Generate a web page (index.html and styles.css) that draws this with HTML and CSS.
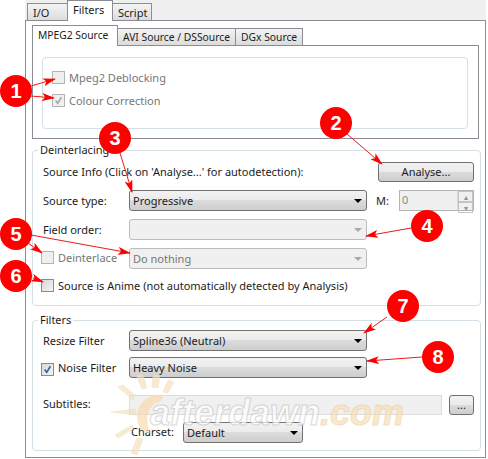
FILE: index.html
```html
<!DOCTYPE html>
<html lang="en">

<head>
    <meta charset="UTF-8">
    <title>Filters</title>

    <link rel="stylesheet" href="styles.css">
</head>

<body>
    <div class="window">
        <div class="tabs">
            <div class="tab">I/O</div>
            <div class="tab active">Filters</div>
            <div class="tab">Script</div>
        </div>

        <div class="panel">
            <div class="tabs inner">
                <div class="tab active">MPEG2 Source</div>
                <div class="tab">AVI Source / DSSource</div>
                <div class="tab">DGx Source</div>
            </div>
            <div class="inner-panel">
                <div class="group options">
                    <div class="check-row muted"><span class="check"></span>Mpeg2 Deblocking</div>
                    <div class="check-row muted">
                        <span class="check">
                            <svg viewBox="0 0 11 11"><path d="M2 5.5 L4.5 9 L9 1.5" fill="none" stroke="#a8a8a8" stroke-width="2"/></svg>
                        </span>Colour Correction
                    </div>
                </div>
            </div>

            <div class="group deinterlacing">
                <span class="group-title">Deinterlacing</span>
                <div class="row">
                    <span class="grow">Source Info (Click on 'Analyse...' for autodetection):</span>
                    <div class="button analyse">Analyse...</div>
                </div>
                <div class="row">
                    <span class="label">Source type:</span>
                    <div class="select">Progressive<i class="caret"></i></div>
                    <span class="m-label">M:</span>
                    <div class="spinner">
                        <span>0</span>
                        <div class="spin-btns"><b>▴</b><b>▾</b></div>
                    </div>
                </div>
                <div class="row">
                    <span class="label">Field order:</span>
                    <div class="select disabled"><i class="caret"></i></div>
                </div>
                <div class="row">
                    <div class="check-row label muted raised"><span class="check"></span>Deinterlace</div>
                    <div class="select disabled">Do nothing<i class="caret"></i></div>
                </div>
                <div class="row">
                    <div class="check-row anime"><span class="check plain"></span>Source is Anime (not automatically detected by Analysis)</div>
                </div>
            </div>

            <div class="group filters">
                <span class="group-title">Filters</span>
                <div class="row">
                    <span class="label">Resize Filter</span>
                    <div class="select">Spline36 (Neutral)<i class="caret"></i></div>
                </div>
                <div class="row noise">
                    <div class="check-row label">
                        <span class="check plain">
                            <svg viewBox="0 0 11 11"><path d="M2 5.5 L4.5 9 L9 1.5" fill="none" stroke="#3c5fa8" stroke-width="2"/></svg>
                        </span>Noise Filter
                    </div>
                    <div class="select">Heavy Noise<i class="caret"></i></div>
                </div>
                <div class="row subtitles">
                    <span class="label subtitles-label">Subtitles:</span>
                    <div class="text-input"></div>
                    <div class="button browse">...</div>
                </div>
                <div class="row charset">
                    <span class="charset-label">Charset:</span>
                    <div class="select charset-select">Default<i class="caret"></i></div>
                </div>
            </div>
        </div>
    </div>

    <!-- watermark -->
    <div class="watermark">
        <svg class="sun" viewBox="0 0 90 90">
            <g fill="#f6e2c0" stroke="#e8d6b4" stroke-width="0.5">
                <polygon points="26,3 33,2 37,16 32,17"/>
                <polygon points="43,3 50,3 48,16 42,15"/>
                <polygon points="58,8 64,10 58,21 53,20"/>
                <polygon points="8,15 13,13 25,23 23,28"/>
                <polygon points="1,40 25,37 26,43"/>
                <polygon points="5,63 22,53 23,57 8,66"/>
                <polygon points="27,66 33,67 27,83 21,81"/>
            </g>
            <path d="M53 23 C38 21 27 32 27 44 C27 54 32 61 40 61 C36 52 36 40 43 33 C47 30 53 31 53 23 Z" fill="#f8dcae"/>
        </svg>
        <span class="wm-text">afterdawn<em>.com</em></span>
    </div>

    <!-- annotation arrows -->
    <svg class="arrows" width="488" height="459" viewBox="0 0 488 459">
        <defs>
            <marker id="head" markerWidth="13" markerHeight="8" refX="12" refY="4" orient="auto" markerUnits="userSpaceOnUse">
                <path d="M0 0 L13 4 L0 8 L3 4 Z" fill="#ff0000"/>
            </marker>
        </defs>
        <g stroke="#f01818" stroke-width="1" fill="none">
            <line x1="31" y1="86" x2="55" y2="79" marker-end="url(#head)"/>
            <line x1="31" y1="96" x2="54" y2="98" marker-end="url(#head)"/>
            <line x1="347" y1="134" x2="382" y2="164" marker-end="url(#head)"/>
            <line x1="120" y1="153" x2="132" y2="192" marker-end="url(#head)"/>
            <line x1="411" y1="228" x2="366" y2="236" marker-end="url(#head)"/>
            <line x1="31" y1="235" x2="130" y2="253" marker-end="url(#head)"/>
            <line x1="28" y1="243" x2="42" y2="253" marker-end="url(#head)"/>
            <line x1="33" y1="278" x2="43" y2="282" marker-end="url(#head)"/>
            <line x1="387" y1="317" x2="364" y2="333" marker-end="url(#head)"/>
            <line x1="422" y1="357" x2="367" y2="361" marker-end="url(#head)"/>
        </g>
    </svg>

    <div class="badge b1">1</div>
    <div class="badge b2">2</div>
    <div class="badge b3">3</div>
    <div class="badge b4">4</div>
    <div class="badge b5">5</div>
    <div class="badge b6">6</div>
    <div class="badge b7">7</div>
    <div class="badge b8">8</div>
</body>

</html>
```

FILE: styles.css
```css
* {
    box-sizing: border-box;
}

body {
    font-family: "Noto Sans", sans-serif;
    font-size: 11px;
    color: #1c1c1c;
    background-color: #fff;
    margin: 0;
    width: 488px;
    height: 459px;
    position: relative;
    overflow: hidden;
}

.window {
    margin-left: 25px;
    width: 461px;
}

.tabs {
    display: flex;
    align-items: flex-end;
    height: 20px;
    padding-left: 2px;
    background-color: #f0f0f0;
    position: relative;
    z-index: 1;
}

.tab {
    height: 17px;
    padding: 0 5px;
    line-height: 17px;
    white-space: nowrap;
    background: linear-gradient(#f4f4f4, #dcdcdc);
    border: 1px solid #8c8c94;
    border-bottom: none;
    margin-left: -1px;
}

.tab:first-child {
    margin-left: 0;
}

.tabs > .tab:nth-child(1) {
    width: 41px;
}

.tabs > .tab:nth-child(2) {
    width: 46px;
}

.tabs > .tab:nth-child(3) {
    width: 40px;
}

.tab.active {
    height: 21px;
    margin-bottom: -1px;
    line-height: 18px;
    background: #fff;
    position: relative;
    z-index: 2;
}

.panel {
    height: 438px;
    padding: 4px 4px 0 6px;
    background-color: #fff;
    border: 1px solid #8c8c94;
}

.tabs.inner {
    padding-left: 0;
    background: none;
}

.tabs.inner > .tab {
    font-size: 10.3px;
}

.tabs.inner > .tab:nth-child(1) {
    width: 86px;
}

.tabs.inner > .tab:nth-child(2) {
    width: 119px;
}

.tabs.inner > .tab:nth-child(3) {
    width: 68px;
}

.inner-panel {
    width: 447px;
    height: 94px;
    padding: 11px 10px 0 9px;
    border: 1px solid #8c8c94;
}

.group {
    position: relative;
    border: 1px solid #d5dfe6;
    border-radius: 4px;
}

.group-title {
    position: absolute;
    top: -9px;
    left: 5px;
    padding: 0 2px;
    background-color: #fff;
}

.options {
    height: 72px;
    padding: 13px 0 0 9px;
    display: flex;
    flex-direction: column;
    gap: 10px;
}

.check-row {
    display: flex;
    align-items: center;
    height: 13px;
    white-space: nowrap;
}

.muted {
    color: #767676;
}

.check {
    flex: none;
    width: 13px;
    height: 13px;
    margin-right: 4px;
    padding: 1px;
    background-color: #f0f0f0;
    border: 1px solid #b4b4b4;
}

.check.plain {
    background: linear-gradient(135deg, #d8d8d8, #f4f4f4);
    border-color: #8a8a8a;
}

.check svg {
    display: block;
}

.deinterlacing {
    width: 449px;
    height: 156px;
    margin-top: 11px;
    padding: 10px 6px 0 10px;
}

.filters {
    width: 449px;
    height: 131px;
    margin-top: 14px;
    padding: 9px 6px 0 10px;
}

.row {
    display: flex;
    align-items: center;
    height: 21px;
    margin-bottom: 8px;
}

.row > .check-row {
    margin-left: -2px;
}

.row > .check-row.label {
    width: 88px;
}

.row > .raised {
    margin-top: -2px;
}

.row > .anime {
    margin-top: -4px;
}

.label {
    flex: none;
    width: 86px;
}

.grow {
    flex: 1;
}

.select {
    position: relative;
    flex: none;
    width: 238px;
    height: 21px;
    padding-left: 3px;
    line-height: 20px;
    background: linear-gradient(#f2f2f2, #ebebeb 48%, #dcdcdc 50%, #cdcdcd);
    border: 1px solid #707070;
    border-radius: 3px;
}

.select.disabled {
    color: #767676;
    background: #f0f0f0;
    border-color: #bcbcbc;
}

.caret {
    position: absolute;
    top: 8px;
    right: 4px;
    border-left: 4px solid transparent;
    border-right: 4px solid transparent;
    border-top: 4px solid #000;
}

.disabled .caret {
    border-top-color: #a8a8a8;
}

.button {
    flex: none;
    height: 20px;
    text-align: center;
    line-height: 17px;
    background: linear-gradient(#f2f2f2, #ebebeb 48%, #dcdcdc 50%, #cdcdcd);
    border: 1px solid #707070;
    border-radius: 3px;
}

.analyse {
    width: 96px;
}

.m-label {
    flex: none;
    width: 23px;
    margin-left: 9px;
}

.spinner {
    flex: none;
    display: flex;
    justify-content: space-between;
    width: 75px;
    height: 21px;
    padding-left: 2px;
    line-height: 18px;
    color: #8a8a8a;
    background-color: #f0f0f0;
    border: 1px solid #b4b4b4;
}

.spin-btns {
    width: 16px;
    display: flex;
    flex-direction: column;
    border-left: 1px solid #d8d8d8;
}

.spin-btns b {
    flex: 1;
    font-size: 8px;
    font-weight: normal;
    line-height: 9px;
    text-align: center;
    color: #909090;
    border: 1px solid #c4c4c4;
}

.noise {
    margin-top: -2px;
}

.noise .check {
    margin-top: 3px;
}

.subtitles {
    margin-top: 16px;
    margin-bottom: 7px;
}

.subtitles-label {
    margin-top: -3px;
}

.text-input {
    flex: none;
    width: 313px;
    height: 20px;
    background-color: #f0f0f0;
    border: 1px solid #dcdcdc;
}

.browse {
    width: 25px;
    margin-left: 7px;
}

.charset {
    padding-left: 88px;
}

.charset-label {
    flex: none;
    width: 52px;
    margin-top: -3px;
}

.select.charset-select {
    width: 120px;
}

.watermark {
    position: absolute;
    left: 110px;
    top: 372px;
    width: 280px;
    height: 86px;
    opacity: 0.7;
}

.sun {
    position: absolute;
    left: 0;
    top: 0;
    width: 90px;
    height: 90px;
}

.wm-text {
    position: absolute;
    left: 40px;
    top: 20px;
    font-family: "Liberation Sans", sans-serif;
    font-size: 36px;
    font-weight: bold;
    font-style: italic;
    white-space: nowrap;
    color: #fff;
    -webkit-text-stroke: 1px #c8c8c8;
}

.wm-text em {
    color: #f8e0b8;
    -webkit-text-stroke: 1px #eed2a4;
}

.arrows {
    position: absolute;
    left: 0;
    top: 0;
}

.badge {
    position: absolute;
    width: 32px;
    height: 32px;
    margin: -16px 0 0 -16px;
    border-radius: 50%;
    background-color: #fe0000;
    color: #fff;
    font-family: "Liberation Sans", sans-serif;
    font-size: 20px;
    font-weight: bold;
    line-height: 32px;
    text-align: center;
}

.b1 { left: 16px; top: 91px; }
.b2 { left: 336px; top: 123px; }
.b3 { left: 115px; top: 138px; }
.b4 { left: 427px; top: 226px; }
.b5 { left: 16px; top: 234px; }
.b6 { left: 16px; top: 276px; }
.b7 { left: 403px; top: 306px; }
.b8 { left: 438px; top: 357px; }
```
